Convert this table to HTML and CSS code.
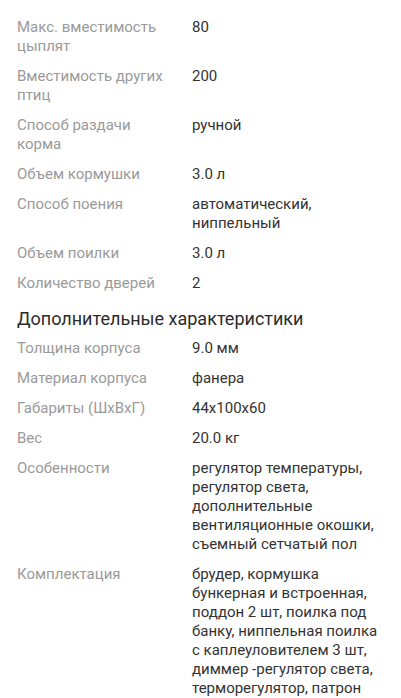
FILE: index.html
```html
<!DOCTYPE html>
<html lang="ru">
<head>
  <meta charset="UTF-8">
  <title>Характеристики</title>
  <meta name="viewport" content="width=device-width, initial-scale=1.0">
  <link rel="stylesheet" href="styles.css">
</head>
<body>
  <div class="specs">
    <div class="spec-list">
      <div class="row"><div class="label">Макс. вместимость цыплят</div><div class="value">80</div></div>
      <div class="row"><div class="label">Вместимость других птиц</div><div class="value">200</div></div>
      <div class="row"><div class="label">Способ раздачи корма</div><div class="value">ручной</div></div>
      <div class="row"><div class="label">Объем кормушки</div><div class="value">3.0 л</div></div>
      <div class="row"><div class="label">Способ поения</div><div class="value">автоматический, ниппельный</div></div>
      <div class="row"><div class="label">Объем поилки</div><div class="value">3.0 л</div></div>
      <div class="row"><div class="label">Количество дверей</div><div class="value">2</div></div>
    </div>

    <h3>Дополнительные характеристики</h3>

    <div class="spec-list">
      <div class="row"><div class="label">Толщина корпуса</div><div class="value">9.0 мм</div></div>
      <div class="row"><div class="label">Материал корпуса</div><div class="value">фанера</div></div>
      <div class="row"><div class="label">Габариты (ШхВхГ)</div><div class="value">44x100x60</div></div>
      <div class="row"><div class="label">Вес</div><div class="value">20.0 кг</div></div>
      <div class="row"><div class="label">Особенности</div><div class="value">регулятор температуры, регулятор света, дополнительные вентиляционные окошки, съемный сетчатый пол</div></div>
      <div class="row"><div class="label">Комплектация</div><div class="value">брудер, кормушка бункерная и встроенная, поддон 2 шт, поилка под банку, ниппельная поилка с каплеуловителем 3 шт, диммер -регулятор света, терморегулятор, патрон</div></div>
    </div>
  </div>
</body>
</html>
```

FILE: styles.css
```css
body {
  margin: 0;
  padding: 0;
  font-family: Roboto, "Noto Sans", sans-serif;
  background: #fff;
  color: #333;
  font-size: 15px;
  line-height: 19px;
}
.specs {
  padding: 18px 17px 0 17px;
}
.spec-list {
  display: flex;
  flex-direction: column;
  gap: 11px;
}
.row {
  display: grid;
  grid-template-columns: 175px 1fr;
}
.label {
  color: #9a9a9a;
  padding-right: 22px;
}
.value {
  color: #333;
}
h3 {
  margin: 14px 0 8px 0;
  font-size: 18px;
  line-height: 24px;
  font-weight: 400;
  color: #2b2b2b;
}
```
